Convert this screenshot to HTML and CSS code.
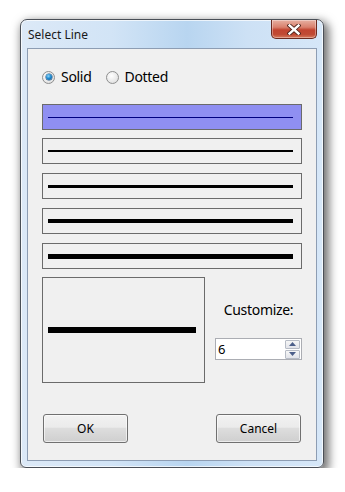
FILE: index.html
```html
<!DOCTYPE html>
<html>
<head>
<meta charset="utf-8">
<link rel="stylesheet" href="styles.css">
</head>
<body>
<div class="window">
  <div class="titlebar">
    <span class="title">Select Line</span>
    <div class="close">
      <svg width="14" height="11" viewBox="0 0 14 11">
        <path d="M2.5 1.5 L11.5 9.5 M11.5 1.5 L2.5 9.5" stroke="#4a2018" stroke-width="4.2" stroke-linecap="square" fill="none"/>
        <path d="M2.5 1.5 L11.5 9.5 M11.5 1.5 L2.5 9.5" stroke="#ffffff" stroke-width="2.4" stroke-linecap="square" fill="none"/>
      </svg>
    </div>
  </div>
  <div class="client">
    <div class="radios">
      <label class="radio"><span class="dot checked"></span><span class="rlabel">Solid</span></label>
      <label class="radio"><span class="dot"></span><span class="rlabel">Dotted</span></label>
    </div>
    <div class="lines">
      <div class="linebox selected"><div class="stroke thin"></div></div>
      <div class="linebox"><div class="stroke w2"></div></div>
      <div class="linebox"><div class="stroke w3"></div></div>
      <div class="linebox"><div class="stroke w4"></div></div>
      <div class="linebox"><div class="stroke w5"></div></div>
    </div>
    <div class="custom">
      <div class="preview"><div class="stroke w6"></div></div>
      <div class="side">
        <div class="clabel">Customize:</div>
        <div class="spin">
          <span class="spinval">6</span>
          <div class="spinbtns">
            <div class="sbtn"><svg width="7" height="4" viewBox="0 0 7 4"><path d="M0 4 L3.5 0 L7 4 Z" fill="#4c5f8a"/></svg></div>
            <div class="sbtn"><svg width="7" height="4" viewBox="0 0 7 4"><path d="M0 0 L3.5 4 L7 0 Z" fill="#4c5f8a"/></svg></div>
          </div>
        </div>
      </div>
    </div>
    <div class="buttons">
      <div class="btn">OK</div>
      <div class="btn">Cancel</div>
    </div>
  </div>
</div>
</body>
</html>
```
FILE: styles.css
```css
html, body {
  margin: 0;
  padding: 0;
  background: #ffffff;
}
body {
  padding: 19px 0 0 20px;
  font-family: "Noto Sans", "Open Sans", sans-serif;
  color: #000;
}
.window {
  box-sizing: border-box;
  width: 304px;
  height: 449px;
  border: 1px solid #4a4f57;
  border-radius: 7px 7px 6px 6px;
  padding: 0 6px 6px 6px;
  background: linear-gradient(90deg, #dce9f7 0%, #d2e4f6 30%, #b8d5f0 55%, #cde1f5 75%, #d6e7f8 100%);
  box-shadow: 3px 4px 10px 2px rgba(0,0,0,0.55), inset 0 0 0 1px rgba(255,255,255,0.7);
}
.titlebar {
  height: 28px;
  display: flex;
  justify-content: space-between;
  align-items: flex-start;
}
.title {
  font-size: 12px;
  line-height: 16px;
  padding: 7px 0 0 1px;
  color: #1a1a1a;
}
.close {
  box-sizing: border-box;
  width: 46px;
  height: 19px;
  border: 1px solid #6b2a20;
  border-top: none;
  border-radius: 0 0 5px 5px;
  background: linear-gradient(180deg, #e7b0a2 0%, #d9806d 40%, #c24430 55%, #c04a34 80%, #d77a5d 100%);
  box-shadow: inset 0 0 0 1px rgba(255,255,255,0.35);
  display: flex;
  align-items: center;
  justify-content: center;
}
.client {
  box-sizing: border-box;
  height: 413px;
  border: 1px solid #8d9db3;
  background: #f0f0f0;
  padding: 0 14px;
}
.radios {
  display: flex;
  align-items: center;
  height: 18px;
  margin-top: 19px;
}
.radio {
  display: flex;
  align-items: center;
  margin-right: 14px;
}
.dot {
  box-sizing: border-box;
  width: 13px;
  height: 13px;
  border-radius: 50%;
  border: 1px solid #8e8f8f;
  background: radial-gradient(circle at 40% 35%, #ffffff 0%, #e8e8e8 60%, #d4d4d4 100%);
  position: relative;
}
.dot.checked::after {
  content: "";
  position: absolute;
  left: 2.5px;
  top: 2.5px;
  width: 6px;
  height: 6px;
  border-radius: 50%;
  background: radial-gradient(circle at 40% 35%, #8fd5f8 0%, #1f8ad0 45%, #0c4f8a 100%);
  box-shadow: 0 0 0 0.5px #1b4d7a;
}
.rlabel {
  font-size: 14px;
  margin-left: 6px;
  line-height: 18px;
  letter-spacing: -0.3px;
}
.lines {
  margin-top: 18px;
  display: flex;
  flex-direction: column;
  gap: 9px;
}
.linebox {
  box-sizing: border-box;
  height: 26px;
  border: 1px solid #6b6b6b;
  display: flex;
  align-items: center;
  padding: 0 8px 0 5px;
}
.linebox.selected {
  background: #8f8ff2;
  margin-bottom: -1px;
}
.stroke {
  flex: 1;
  background: #000;
}
.stroke.thin { height: 1px; background: #000080; }
.stroke.w2 { height: 2px; }
.stroke.w3 { height: 3px; }
.stroke.w4 { height: 4px; }
.stroke.w5 { height: 5px; }
.stroke.w6 { height: 6px; }
.custom {
  display: flex;
  margin-top: 8px;
}
.preview {
  box-sizing: border-box;
  width: 163px;
  height: 106px;
  border: 1px solid #6b6b6b;
  display: flex;
  align-items: center;
  padding: 0 8px 0 5px;
}
.side {
  margin-left: 10px;
  width: 87px;
  display: flex;
  flex-direction: column;
  align-items: center;
}
.clabel {
  font-size: 14px;
  line-height: 20px;
  margin-top: 23px;
  letter-spacing: -0.3px;
}
.spin {
  box-sizing: border-box;
  margin-top: 18px;
  width: 87px;
  height: 22px;
  border: 1px solid #abadb3;
  background: #fff;
  display: flex;
  align-items: center;
  justify-content: space-between;
  padding: 0 1px 0 1px;
}
.spinval {
  font-size: 13px;
  line-height: 16px;
  padding-left: 1px;
}
.spinbtns {
  display: flex;
  flex-direction: column;
  gap: 1px;
}
.sbtn {
  box-sizing: border-box;
  width: 15px;
  height: 9px;
  border: 1px solid #b7bcc6;
  border-radius: 1px;
  background: linear-gradient(180deg, #f6f6f6, #e2e4ea);
  display: flex;
  align-items: center;
  justify-content: center;
}
.buttons {
  display: flex;
  justify-content: space-between;
  margin-top: 31px;
  padding: 0 1px;
}
.btn {
  box-sizing: border-box;
  width: 85px;
  height: 29px;
  border: 1px solid #707070;
  border-radius: 3px;
  background: linear-gradient(180deg, #f2f2f2 0%, #ebebeb 45%, #dddddd 50%, #cfcfcf 100%);
  box-shadow: inset 0 0 0 1px rgba(255,255,255,0.6);
  display: flex;
  align-items: center;
  justify-content: center;
  font-size: 12px;
}
```
